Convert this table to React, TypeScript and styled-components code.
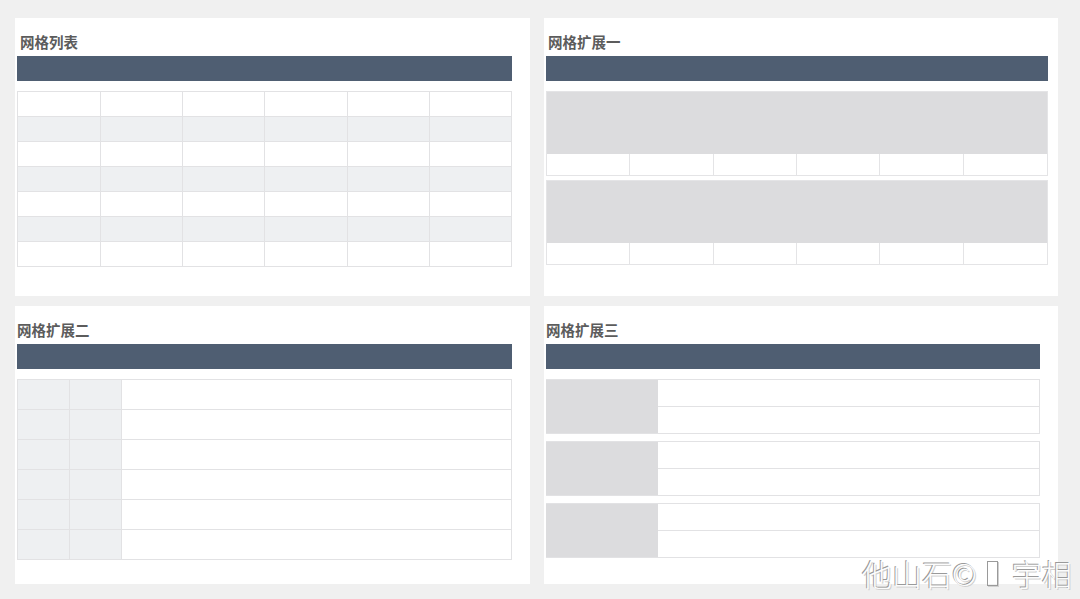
import React from "react";
import styled, { createGlobalStyle } from "styled-components";

const Global = createGlobalStyle`
  html, body { margin: 0; padding: 0; background: #f0f0f0; }
  body { font-family: "Noto Sans CJK SC", "Noto Sans", sans-serif; }
`;

const Page = styled.div`
  position: relative;
  width: 1080px;
  height: 599px;
  box-sizing: border-box;
  padding: 18px 22px 0 15px;
  display: grid;
  grid-template-columns: 515px 514px;
  grid-template-rows: 278px 278px;
  column-gap: 14px;
  row-gap: 10px;
  background: #f0f0f0;
`;

const Panel = styled.section<{ $titleX: number; $barRight: number }>`
  background: #fff;
  display: flex;
  flex-direction: column;
  padding: 14px ${(p) => p.$barRight}px 0 2px;
  --title-x: ${(p) => p.$titleX}px;
`;

const Title = styled.h3`
  margin: 0 0 4px;
  padding-left: var(--title-x);
  font-size: 14.5px;
  line-height: 20px;
  font-weight: 700;
  color: #5c5c5c;
`;

const Bar = styled.div`
  height: 25px;
  background: #4f5e72;
  margin-bottom: 10px;
  flex: none;
`;

const Table = styled.div`
  display: grid;
  grid-template-columns: 83px repeat(5, 1fr);
  border-top: 1px solid #e2e2e4;
  border-left: 1px solid #e2e2e4;
`;

const Cell = styled.div<{ $alt: boolean }>`
  height: 25px;
  box-sizing: border-box;
  border-right: 1px solid #e2e2e4;
  border-bottom: 1px solid #e2e2e4;
  background: ${(p) => (p.$alt ? "#eef0f2" : "#fff")};
`;

const Cards = styled.div`
  display: flex;
  flex-direction: column;
  gap: 4px;
`;

const Card = styled.div`
  display: flex;
  flex-direction: column;
  border: 1px solid #e4e4e6;
`;

const CardImage = styled.div`
  height: 62px;
  background: #dcdcde;
`;

const CardRow = styled.div`
  display: grid;
  grid-template-columns: repeat(6, 1fr);
  height: 21px;
`;

const CardCell = styled.div`
  border-right: 1px solid #e4e4e6;
  &:last-child { border-right: none; }
`;

const SideTable = styled.div`
  display: grid;
  grid-template-columns: 52px 52px 1fr;
  border: 1px solid #e2e2e4;
  border-bottom: none;
`;

const SideCell = styled.div<{ $gray: boolean }>`
  height: 30px;
  box-sizing: border-box;
  border-bottom: 1px solid #e2e2e4;
  border-right: ${(p) => (p.$gray ? "1px solid #e2e2e4" : "none")};
  background: ${(p) => (p.$gray ? "#eef0f2" : "#fff")};
`;

const Groups = styled.div`
  display: flex;
  flex-direction: column;
  gap: 7px;
`;

const Group = styled.div`
  display: grid;
  grid-template-columns: 112px 1fr;
  height: 55px;
  box-sizing: border-box;
  border: 1px solid #e2e2e4;
  border-left: none;
`;

const GroupImage = styled.div`
  background: #dcdcde;
`;

const GroupLines = styled.div`
  display: grid;
  grid-template-rows: 1fr 1fr;
`;

const GroupLine = styled.div`
  &:first-child { border-bottom: 1px solid #e2e2e4; }
`;

const Watermark = styled.div`
  position: absolute;
  left: 862px;
  top: 551px;
  font-family: "Noto Sans CJK SC", sans-serif;
  font-weight: 300;
  font-size: 30px;
  line-height: 44px;
  color: #fcfcfc;
  text-shadow: -1px -1px 0 #9a9a9a, 1px 1px 0 #d0d0d0;
  white-space: nowrap;
  display: flex;
  align-items: center;
`;

const Tofu = styled.span`
  display: inline-block;
  width: 11px;
  height: 25px;
  box-sizing: border-box;
  border: 1px solid #9a9a9a;
  margin: 0 14px 0 10px;
  box-shadow: 1px 1px 0 #d0d0d0;
`;

export default function App() {
  const rows = Array.from({ length: 7 });
  const cols = Array.from({ length: 6 });
  return (
    <>
      <Global />
      <Page>
        <Panel $titleX={3} $barRight={18}>
          <Title>网格列表</Title>
          <Bar />
          <Table>
            {rows.map((_, r) =>
              cols.map((__, c) => <Cell key={`${r}-${c}`} $alt={r % 2 === 1} />)
            )}
          </Table>
        </Panel>

        <Panel $titleX={2} $barRight={10}>
          <Title>网格扩展一</Title>
          <Bar />
          <Cards>
            {[0, 1].map((g) => (
              <Card key={g}>
                <CardImage />
                <CardRow>
                  {cols.map((_, c) => (
                    <CardCell key={c} />
                  ))}
                </CardRow>
              </Card>
            ))}
          </Cards>
        </Panel>

        <Panel $titleX={0} $barRight={18}>
          <Title>网格扩展二</Title>
          <Bar />
          <SideTable>
            {Array.from({ length: 6 }).map((_, r) => (
              <React.Fragment key={r}>
                <SideCell $gray />
                <SideCell $gray />
                <SideCell $gray={false} />
              </React.Fragment>
            ))}
          </SideTable>
        </Panel>

        <Panel $titleX={0} $barRight={18}>
          <Title>网格扩展三</Title>
          <Bar />
          <Groups>
            {[0, 1, 2].map((g) => (
              <Group key={g}>
                <GroupImage />
                <GroupLines>
                  <GroupLine />
                  <GroupLine />
                </GroupLines>
              </Group>
            ))}
          </Groups>
        </Panel>

        <Watermark>
          他山石©<Tofu />宇相
        </Watermark>
      </Page>
    </>
  );
}
